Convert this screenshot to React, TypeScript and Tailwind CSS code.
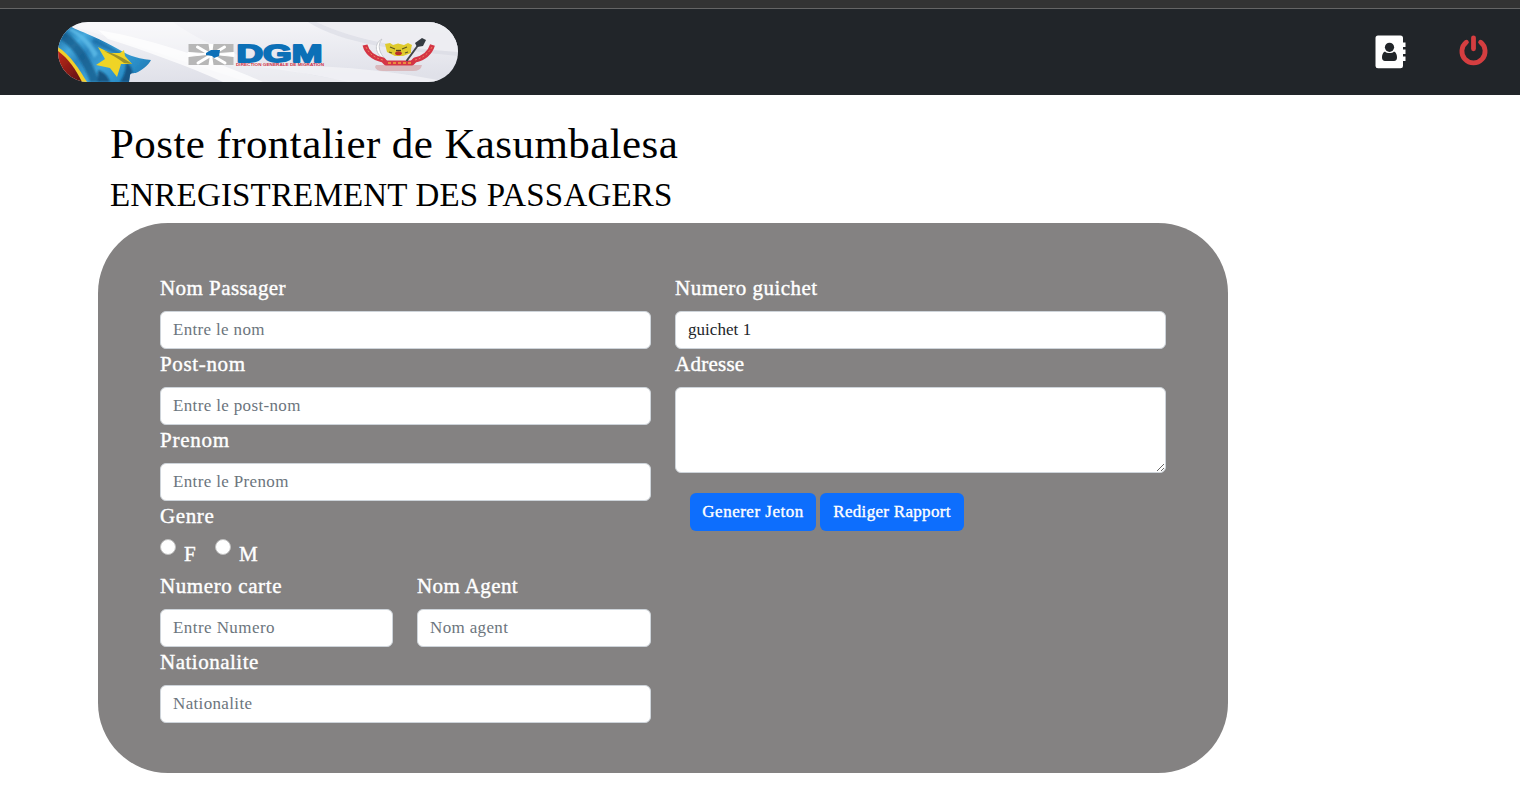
import React from "react";

const labelClass =
  "block h-[30px] mb-2 whitespace-nowrap text-[21px] leading-[30px] text-white [-webkit-text-stroke:0.4px_white]";
const controlClass =
  "block w-full rounded-md border border-[#ced4da] bg-white px-3 text-[17px] text-[#212529] outline-none placeholder:text-[#6c757d] placeholder:opacity-100";
const buttonClass =
  "h-[38px] rounded-md bg-[#0d6efd] text-center text-[17px] leading-[38px] whitespace-nowrap text-white [-webkit-text-stroke:0.35px_white]";

type FieldProps = {
  label: string;
  labelSpacing: string;
  inputSpacing: string;
  placeholder?: string;
  value?: string;
};

function Field({ label, labelSpacing, inputSpacing, placeholder, value }: FieldProps) {
  return (
    <div>
      <label className={`${labelClass} ${labelSpacing}`}>{label}</label>
      <input
        type="text"
        placeholder={placeholder}
        defaultValue={value}
        className={`${controlClass} h-[38px] ${inputSpacing}`}
      />
    </div>
  );
}

function Banner() {
  return (
    <svg width="400" height="60" viewBox="0 0 400 60" className="block rounded-full">
      <defs>
        <linearGradient id="sky" x1="0" y1="0" x2="0.15" y2="1">
          <stop offset="0" stopColor="#f6f6f9" />
          <stop offset="1" stopColor="#e0e1e9" />
        </linearGradient>
        <linearGradient id="cloth" x1="0" y1="0.2" x2="1" y2="0.8">
          <stop offset="0" stopColor="#1b6ea6" />
          <stop offset="0.2" stopColor="#45a9dd" />
          <stop offset="0.34" stopColor="#2a85bf" />
          <stop offset="0.55" stopColor="#3fa3d8" />
          <stop offset="0.78" stopColor="#2b8ec8" />
          <stop offset="1" stopColor="#1c73ad" />
        </linearGradient>
        <linearGradient id="redBand" x1="0" y1="0" x2="1" y2="1">
          <stop offset="0" stopColor="#c0281c" />
          <stop offset="1" stopColor="#5a1210" />
        </linearGradient>
        <filter id="soft" x="-10%" y="-10%" width="120%" height="120%">
          <feGaussianBlur stdDeviation="0.45" />
        </filter>
        <filter id="folds" x="-20%" y="-20%" width="140%" height="140%">
          <feGaussianBlur stdDeviation="1.3" />
        </filter>
        <clipPath id="flagShape">
          <path d="M0 4L10 3C20 9 26 10 34 14C44 18 52 23 60 27C68 32 76 36 93 38C91 42 87 46 80 50C77 52 73 50 72 53L71 60H0Z" />
        </clipPath>
      </defs>
      <rect width="400" height="60" fill="url(#sky)" />
      <path d="M20 0H115C150 26 215 50 300 60H190C120 38 70 20 20 6Z" fill="#fff" opacity=".35" />
      <path d="M40 8C100 18 165 42 205 60H165C130 44 85 28 50 17Z" fill="#fff" opacity=".75" />
      <path d="M250 0C285 22 340 28 400 34V0Z" fill="#d3d5df" opacity=".5" />
      <path d="M258 0C300 20 350 26 400 30V0Z" fill="#eeeef3" opacity=".9" />
      <path d="M200 45C260 41 330 48 390 60H290C265 54 235 49 200 45Z" fill="#f2f2f6" opacity=".8" />

      <g filter="url(#soft)">
        <g clipPath="url(#flagShape)">
          <rect width="100" height="60" fill="url(#cloth)" />
          <g filter="url(#folds)">
            <path d="M4 8C24 20 34 40 42 60H32C25 40 14 24 0 16Z" fill="#145583" opacity=".7" />
            <path d="M14 6C28 14 36 24 40 32L36 36C30 24 22 14 10 8Z" fill="#5fbdea" opacity=".8" />
            <path d="M36 16C48 22 58 28 66 32L60 33C50 28 42 24 34 20Z" fill="#1c6ea8" opacity=".8" />
            <path d="M40 48C46 50 50 54 52 60H40Z" fill="#0f4671" opacity=".8" />
            <path d="M68 40C76 46 76 54 72 60H62C66 54 68 48 68 40Z" fill="#124a78" opacity=".85" />
          </g>
          <path d="M0 25C13 34 21 47 29 60H0Z" fill="#f1cf29" />
          <path d="M0 29C11 37 18 48 24 60H0Z" fill="url(#redBand)" />
        </g>
        <path d="M40 25L52 31L62 31L66 28L67 34L74 42L63 42L59 55L52 46L38 43L47 37Z" fill="#efd428" />
        <path d="M46 29C56 31 66 36 74 42L66 41C60 36 52 32 46 29Z" fill="#857f2c" opacity=".8" />
      </g>

      <g filter="url(#soft)">
        <rect x="130.5" y="22" width="45" height="21" fill="#b7b7b7" />
        <path d="M150.500 22H155.500L154 32.500H152Z M150.500 43H155.500L154 32.500H152Z" fill="#fff" />
        <path d="M130 30.500L153 32L130 34.500Z M176 30.500L153 32L176 34.500Z" fill="#fff" stroke="#fff" />
        <path d="M139.500 25L167 41M166.500 25L140 41" stroke="#fff" strokeWidth="3" strokeLinecap="round" />
        <path d="M148 31L153 28L162 28L161 34L156 36L154 34L148 33Z" fill="#0b6fb8" />
      </g>
      <text x="178.500" y="39.700" fontFamily="Liberation Sans, sans-serif" fontWeight="700" fontSize="24.500" textLength="86" lengthAdjust="spacingAndGlyphs" fill="#0c70b7" stroke="#0c70b7" strokeWidth="1.800" strokeLinejoin="round">
        DGM
      </text>
      <text x="178" y="43.500" fontFamily="Liberation Sans, sans-serif" fontWeight="700" fontSize="2.600" textLength="88" lengthAdjust="spacingAndGlyphs" fill="#cf3349">
        DIRECTION GENERALE DE MIGRATION
      </text>

      <g filter="url(#soft)">
        <path d="M318 43H364Q363 49 355 49H325Q318 49 317 45Z" fill="#d9b9bd" />
        <path d="M324 17C315 22 317 33 328 38C321 31 319 23 324 17Z" fill="#fff" stroke="#c6c8cd" strokeWidth="1" />
        <path d="M307 23C309 31 316 36 325 38L328 41H354L357 38C366 36 372 31 374.500 23" fill="none" stroke="#d53645" strokeWidth="5" strokeLinejoin="round" />
        <path d="M308 25C311 32 317 36 325 38M357 38C365 36 371 31 374 25" fill="none" stroke="#eb8359" strokeWidth="1" strokeDasharray="2 2" />
        <path d="M348.500 39L361 22" stroke="#41454b" strokeWidth="2" />
        <path d="M357 21L364 16L368 18L365 24L359 25Z" fill="#353b42" />
        <path d="M327 22L332 21L335 23L340 21.500L346 23L350 21L354 23L353 27L353 31L345 34H337L329 30Z" fill="#dfcb2d" />
        <path d="M332 25L337 27M344 27L349 25M331 30L334 31M350 30L347 31" stroke="#5e5623" strokeWidth="1.200" />
        <ellipse cx="340.500" cy="31.300" rx="3.300" ry="2" fill="#bb2d2b" />
        <path d="M338 28.500H343" stroke="#4b3d24" strokeWidth="1.300" />
        <path d="M330 41H354" stroke="#f0a83d" strokeWidth="1.500" strokeDasharray="3 2" />
      </g>
    </svg>
  );
}

function AddressBookIcon() {
  return (
    <svg width="32" height="34" viewBox="0 0 32 34" className="block">
      <path d="M3 .5H25.500Q28 .5 28 3V7.500H30.500V12H28V14.500H30.500V19H28V21.500H30.500V26H28V31Q28 33.300 25.500 33.300H3Q.5 33.300 .5 31V3Q.5 .5 3 .5Z" fill="#fff" />
      <path d="M10 16.500C7.500 17.500 7 20.500 7 22.500C7 24.800 8.200 26 10 26H19C21 26 22 24.800 22 22.500C22 20.500 21.500 17.500 19 16.500C17.500 18.500 11.500 18.500 10 16.500Z" fill="#212529" />
      <circle cx="14.500" cy="12.300" r="4.600" fill="#212529" />
    </svg>
  );
}

function PowerIcon() {
  return (
    <svg width="30" height="32" viewBox="0 0 30 32" className="block">
      <path d="M7.400 7.200A11.600 11.600 0 1 0 21.600 7.200" fill="none" stroke="#d53e40" strokeWidth="4.800" strokeLinecap="round" />
      <path d="M14.500 2.800V13.800" stroke="#d53e40" strokeWidth="4.800" strokeLinecap="round" />
    </svg>
  );
}

function GenderOption({ label, className }: { label: string; className: string }) {
  return (
    <label className={`flex items-start ${className}`}>
      <input
        type="radio"
        name="genre"
        className="m-0 size-4 appearance-none rounded-full border border-[#bfbfbf] bg-white"
      />
      <span className="ml-2 text-[21px] leading-[30px] text-white [-webkit-text-stroke:0.4px_white]">{label}</span>
    </label>
  );
}

export default function App() {
  return (
    <div className="h-[794px] overflow-hidden bg-white font-['Liberation_Serif',serif]">
      <div className="h-[9px] border-b border-[#656565] bg-[#333333]" />
      <header className="flex h-[86px] items-start justify-between bg-[#212529] pt-[13px] pr-[31px] pl-[58px]">
        <Banner />
        <div className="flex items-start gap-[52px] pt-[13px]">
          <AddressBookIcon />
          <PowerIcon />
        </div>
      </header>

      <main className="pt-[25px] pl-[98px]">
        <h1 className="h-14 pl-3 text-[43px] leading-[48px] tracking-[0.42px] whitespace-nowrap text-black">
          Poste frontalier de Kasumbalesa
        </h1>
        <h2 className="h-[47px] pl-3 text-[33px] leading-[38px] tracking-[0.18px] whitespace-nowrap text-black">
          ENREGISTREMENT DES PASSAGERS
        </h2>

        <form
          className="grid h-[550px] w-[1130px] grid-cols-[491px_491px] gap-x-6 rounded-[70px] bg-[#848282] py-[50px] pl-[62px]"
          onSubmit={(event) => event.preventDefault()}
        >
          <div>
            <Field label="Nom Passager" labelSpacing="tracking-[0.44px]" placeholder="Entre le nom" inputSpacing="tracking-[0.33px]" />
            <Field label="Post-nom" labelSpacing="tracking-[0.65px]" placeholder="Entre le post-nom" inputSpacing="tracking-[0.35px]" />
            <Field label="Prenom" labelSpacing="tracking-[0.75px]" placeholder="Entre le Prenom" inputSpacing="tracking-[0.35px]" />
            <span className={`${labelClass} tracking-[0.6px]`}>Genre</span>
            <div className="flex h-8">
              <GenderOption label="F" className="w-[55px]" />
              <GenderOption label="M" className="" />
            </div>
            <div className="grid grid-cols-[233px_234px] gap-x-6">
              <Field label="Numero carte" labelSpacing="tracking-[0.6px]" placeholder="Entre Numero" inputSpacing="tracking-[0.43px]" />
              <Field label="Nom Agent" labelSpacing="tracking-[0.4px]" placeholder="Nom agent" inputSpacing="tracking-[0.35px]" />
            </div>
            <Field label="Nationalite" labelSpacing="tracking-[0.5px]" placeholder="Nationalite" inputSpacing="tracking-[0.35px]" />
          </div>

          <div>
            <Field label="Numero guichet" labelSpacing="tracking-[0.48px]" value="guichet 1" inputSpacing="tracking-[0.05px]" />
            <label className={`${labelClass} tracking-[0.25px]`}>Adresse</label>
            <textarea className={`${controlClass} h-[86px] resize py-1.5`} />
            <div className="mt-5 flex gap-1 pl-[15px]">
              <button type="button" className={`${buttonClass} w-[126px] tracking-[0.5px]`}>
                Generer Jeton
              </button>
              <button type="button" className={`${buttonClass} w-36 tracking-[0.3px]`}>
                Rediger Rapport
              </button>
            </div>
          </div>
        </form>
      </main>
    </div>
  );
}
